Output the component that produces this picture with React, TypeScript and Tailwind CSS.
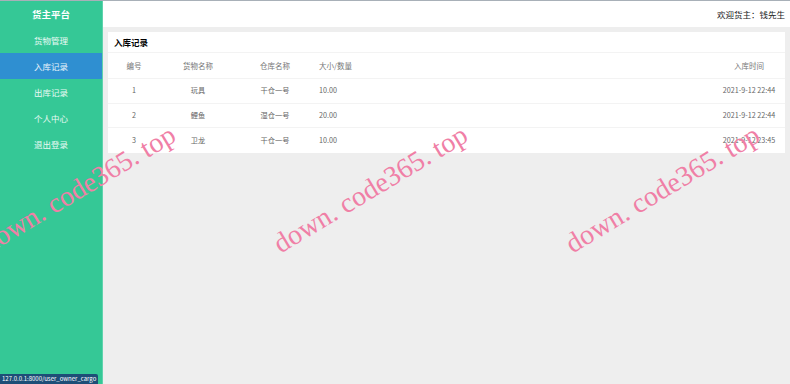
import React from "react"

const menu = ["货物管理", "入库记录", "出库记录", "个人中心", "退出登录"]

const rows = [
  { id: 1, name: "玩具", store: "干仓一号", size: "10.00", time: "2021-9-12 22:44" },
  { id: 2, name: "鲤鱼", store: "湿仓一号", size: "20.00", time: "2021-9-12 22:44" },
  { id: 3, name: "卫龙", store: "干仓一号", size: "10.00", time: "2021-9-12 23:45" },
]

function Watermark({ className }: { className: string }) {
  return (
    <div
      className={`pointer-events-none absolute origin-bottom-left -rotate-[31deg] whitespace-nowrap text-[28px] leading-none text-[#f07fa6] ${className}`}
      style={{ fontFamily: '"Liberation Serif", "DejaVu Serif", serif' }}
    >
      down. code365. top
    </div>
  )
}

export default function App() {
  return (
    <div
      className="relative flex h-[384px] w-full overflow-hidden border-t border-[#a8b0b8]"
      style={{ fontFamily: '"Noto Sans CJK SC", "Noto Sans", sans-serif' }}
    >
      {/* Sidebar */}
      <aside className="w-[103px] shrink-0 border-r border-[#5fd3ad] bg-[#35c896] text-white">
        <div className="flex h-[26px] items-center justify-center text-[9.5px] font-bold">货主平台</div>
        <nav className="flex flex-col">
          {menu.map((m) => (
            <div
              key={m}
              className={`flex h-[26px] items-center justify-center text-[8.5px] text-white/90 ${
                m === "入库记录" ? "bg-[#2f8fd1]" : ""
              }`}
            >
              {m}
            </div>
          ))}
        </nav>
      </aside>

      {/* Main */}
      <main className="flex flex-1 flex-col bg-[#eeeeee]">
        <header className="flex h-[26px] items-center justify-end bg-white pr-[5px] text-[8.5px] text-[#222]">
          欢迎货主：钱先生
        </header>

        <div className="p-[5px]">
          <div className="bg-white">
            <div className="flex h-[21px] items-center border-b border-[#f3f3f3] pl-[6px] text-[8.5px] font-bold text-black">
              入库记录
            </div>
            <div className="flex h-[26px] items-center border-b border-[#f3f3f3] text-[7.5px] text-[#777]">
              <div className="w-[52px] text-center">编号</div>
              <div className="w-[76px] text-center">货物名称</div>
              <div className="w-[78px] text-center">仓库名称</div>
              <div className="flex-1 pl-[5px]">大小/数量</div>
              <div className="w-[72px] text-center">入库时间</div>
            </div>
            {rows.map((r, i) => (
              <div
                key={r.id}
                className={`flex h-[24.5px] items-center text-[7.2px] text-[#666] ${
                  i < rows.length - 1 ? "border-b border-[#f3f3f3]" : ""
                }`}
              >
                <div className="w-[52px] text-center">{r.id}</div>
                <div className="w-[76px] text-center">{r.name}</div>
                <div className="w-[78px] text-center">{r.store}</div>
                <div className="flex-1 pl-[5px]">{r.size}</div>
                <div className="w-[72px] whitespace-nowrap text-center">{r.time}</div>
              </div>
            ))}
          </div>
        </div>
      </main>

      {/* Watermarks */}
      <Watermark className="left-[-9px] top-[229px]" />
      <Watermark className="left-[283px] top-[229px]" />
      <Watermark className="left-[575px] top-[229px]" />

      {/* Browser status bar */}
      <div className="absolute bottom-0 left-0 rounded-tr-[2px] bg-[#1d4e77] px-[2px] text-[6px] leading-[10px] text-white">
        127.0.0.1:8000/user_owner_cargo
      </div>
    </div>
  )
}
